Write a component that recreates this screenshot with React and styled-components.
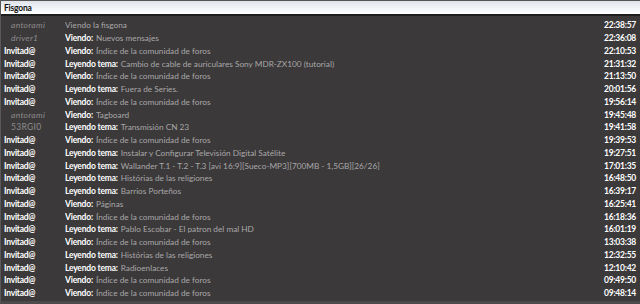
import React from 'react'
import styled, { createGlobalStyle } from 'styled-components'

const GlobalStyle = createGlobalStyle`
  html, body {
    margin: 0;
    padding: 0;
    background: #3b393a;
  }
  * { box-sizing: border-box; }
`

const rows = [
  { user: 'antorami', kind: 'member', action: null, text: 'Viendo la fisgona', time: '22:38:57' },
  { user: 'driver1', kind: 'member', action: 'Viendo:', text: 'Nuevos mensajes', time: '22:36:08' },
  { user: 'Invitad@', kind: 'guest', action: 'Viendo:', text: 'Índice de la comunidad de foros', time: '22:10:53' },
  { user: 'Invitad@', kind: 'guest', action: 'Leyendo tema:', text: 'Cambio de cable de auriculares Sony MDR-ZX100 (tutorial)', time: '21:31:32' },
  { user: 'Invitad@', kind: 'guest', action: 'Viendo:', text: 'Índice de la comunidad de foros', time: '21:13:50' },
  { user: 'Invitad@', kind: 'guest', action: 'Leyendo tema:', text: 'Fuera de Series.', time: '20:01:56' },
  { user: 'Invitad@', kind: 'guest', action: 'Viendo:', text: 'Índice de la comunidad de foros', time: '19:56:14' },
  { user: 'antorami', kind: 'member', action: 'Viendo:', text: 'Tagboard', time: '19:45:48' },
  { user: '53RGI0', kind: 'plain', action: 'Leyendo tema:', text: 'Transmisión CN 23', time: '19:41:58' },
  { user: 'Invitad@', kind: 'guest', action: 'Viendo:', text: 'Índice de la comunidad de foros', time: '19:39:53' },
  { user: 'Invitad@', kind: 'guest', action: 'Leyendo tema:', text: 'Instalar y Configurar Televisión Digital Satélite', time: '19:27:51' },
  { user: 'Invitad@', kind: 'guest', action: 'Leyendo tema:', text: 'Wallander T.1 - T.2 - T.3 [avi 16:9][Sueco-MP3][700MB - 1,5GB][26/26]', time: '17:01:35' },
  { user: 'Invitad@', kind: 'guest', action: 'Leyendo tema:', text: 'Histórias de las religiones', time: '16:48:50' },
  { user: 'Invitad@', kind: 'guest', action: 'Leyendo tema:', text: 'Barrios Porteños', time: '16:39:17' },
  { user: 'Invitad@', kind: 'guest', action: 'Viendo:', text: 'Páginas', time: '16:25:41' },
  { user: 'Invitad@', kind: 'guest', action: 'Viendo:', text: 'Índice de la comunidad de foros', time: '16:18:36' },
  { user: 'Invitad@', kind: 'guest', action: 'Leyendo tema:', text: 'Pablo Escobar - El patron del mal HD', time: '16:01:19' },
  { user: 'Invitad@', kind: 'guest', action: 'Viendo:', text: 'Índice de la comunidad de foros', time: '13:03:38' },
  { user: 'Invitad@', kind: 'guest', action: 'Leyendo tema:', text: 'Histórias de las religiones', time: '12:32:55' },
  { user: 'Invitad@', kind: 'guest', action: 'Leyendo tema:', text: 'Radioenlaces', time: '12:10:42' },
  { user: 'Invitad@', kind: 'guest', action: 'Viendo:', text: 'Índice de la comunidad de foros', time: '09:49:50' },
  { user: 'Invitad@', kind: 'guest', action: 'Viendo:', text: 'Índice de la comunidad de foros', time: '09:48:14' },
]

function App() {
  return (
    <>
      <GlobalStyle />
      <Panel>
        <Header>Fisgona</Header>
        <List>
          {rows.map((r, i) => (
            <Row key={i}>
              <User $kind={r.kind}>{r.user}</User>
              <Activity>
                {r.action && <Action>{r.action}</Action>}
                <Target>{r.text}</Target>
              </Activity>
              <Time>{r.time}</Time>
            </Row>
          ))}
        </List>
      </Panel>
    </>
  )
}

const Panel = styled.div`
  width: 640px;
  height: 304px;
  display: flex;
  flex-direction: column;
  background: #3b393a;
  font-family: Lato, "Liberation Sans", sans-serif;
  font-size: 8.5px;
  overflow: hidden;
  border-left: 1px solid #5a5859;
  border-bottom: 3px solid #4c4a4b;
`

const Header = styled.div`
  height: 16px;
  flex-shrink: 0;
  padding: 2px 0 0 3px;
  font-weight: bold;
  font-size: 8.5px;
  letter-spacing: -0.2px;
  color: #111;
  background: linear-gradient(to bottom, #dfe3e9 0%, #f4f6f8 60%, #ffffff 100%);
  border-top: 1px solid #555;
  border-bottom: 2px solid #1e1e1e;
`

const List = styled.div`
  display: flex;
  flex-direction: column;
  padding: 3px 4px 0 2px;
`

const Row = styled.div`
  display: grid;
  grid-template-columns: 62px 1fr auto;
  align-items: center;
  height: 12.75px;
  white-space: nowrap;
`

const User = styled.span`
  padding-left: ${p => (p.$kind === 'guest' ? '1px' : '8px')};
  color: ${p => (p.$kind === 'guest' ? '#ffffff' : '#8e8c8d')};
  font-weight: ${p => (p.$kind === 'guest' ? 'bold' : 'normal')};
  font-style: ${p => (p.$kind === 'member' ? 'italic' : 'normal')};
  letter-spacing: ${p => (p.$kind === 'guest' ? '-0.25px' : '0.3px')};
`

const Activity = styled.span`
  overflow: hidden;
`

const Action = styled.span`
  color: #ffffff;
  font-weight: bold;
  letter-spacing: -0.2px;
  margin-right: 3px;
`

const Target = styled.span`
  color: #a9a7a8;
  font-size: 8.25px;
`

const Time = styled.span`
  color: #ffffff;
  font-weight: bold;
  letter-spacing: -0.25px;
  text-align: right;
`

export default App
